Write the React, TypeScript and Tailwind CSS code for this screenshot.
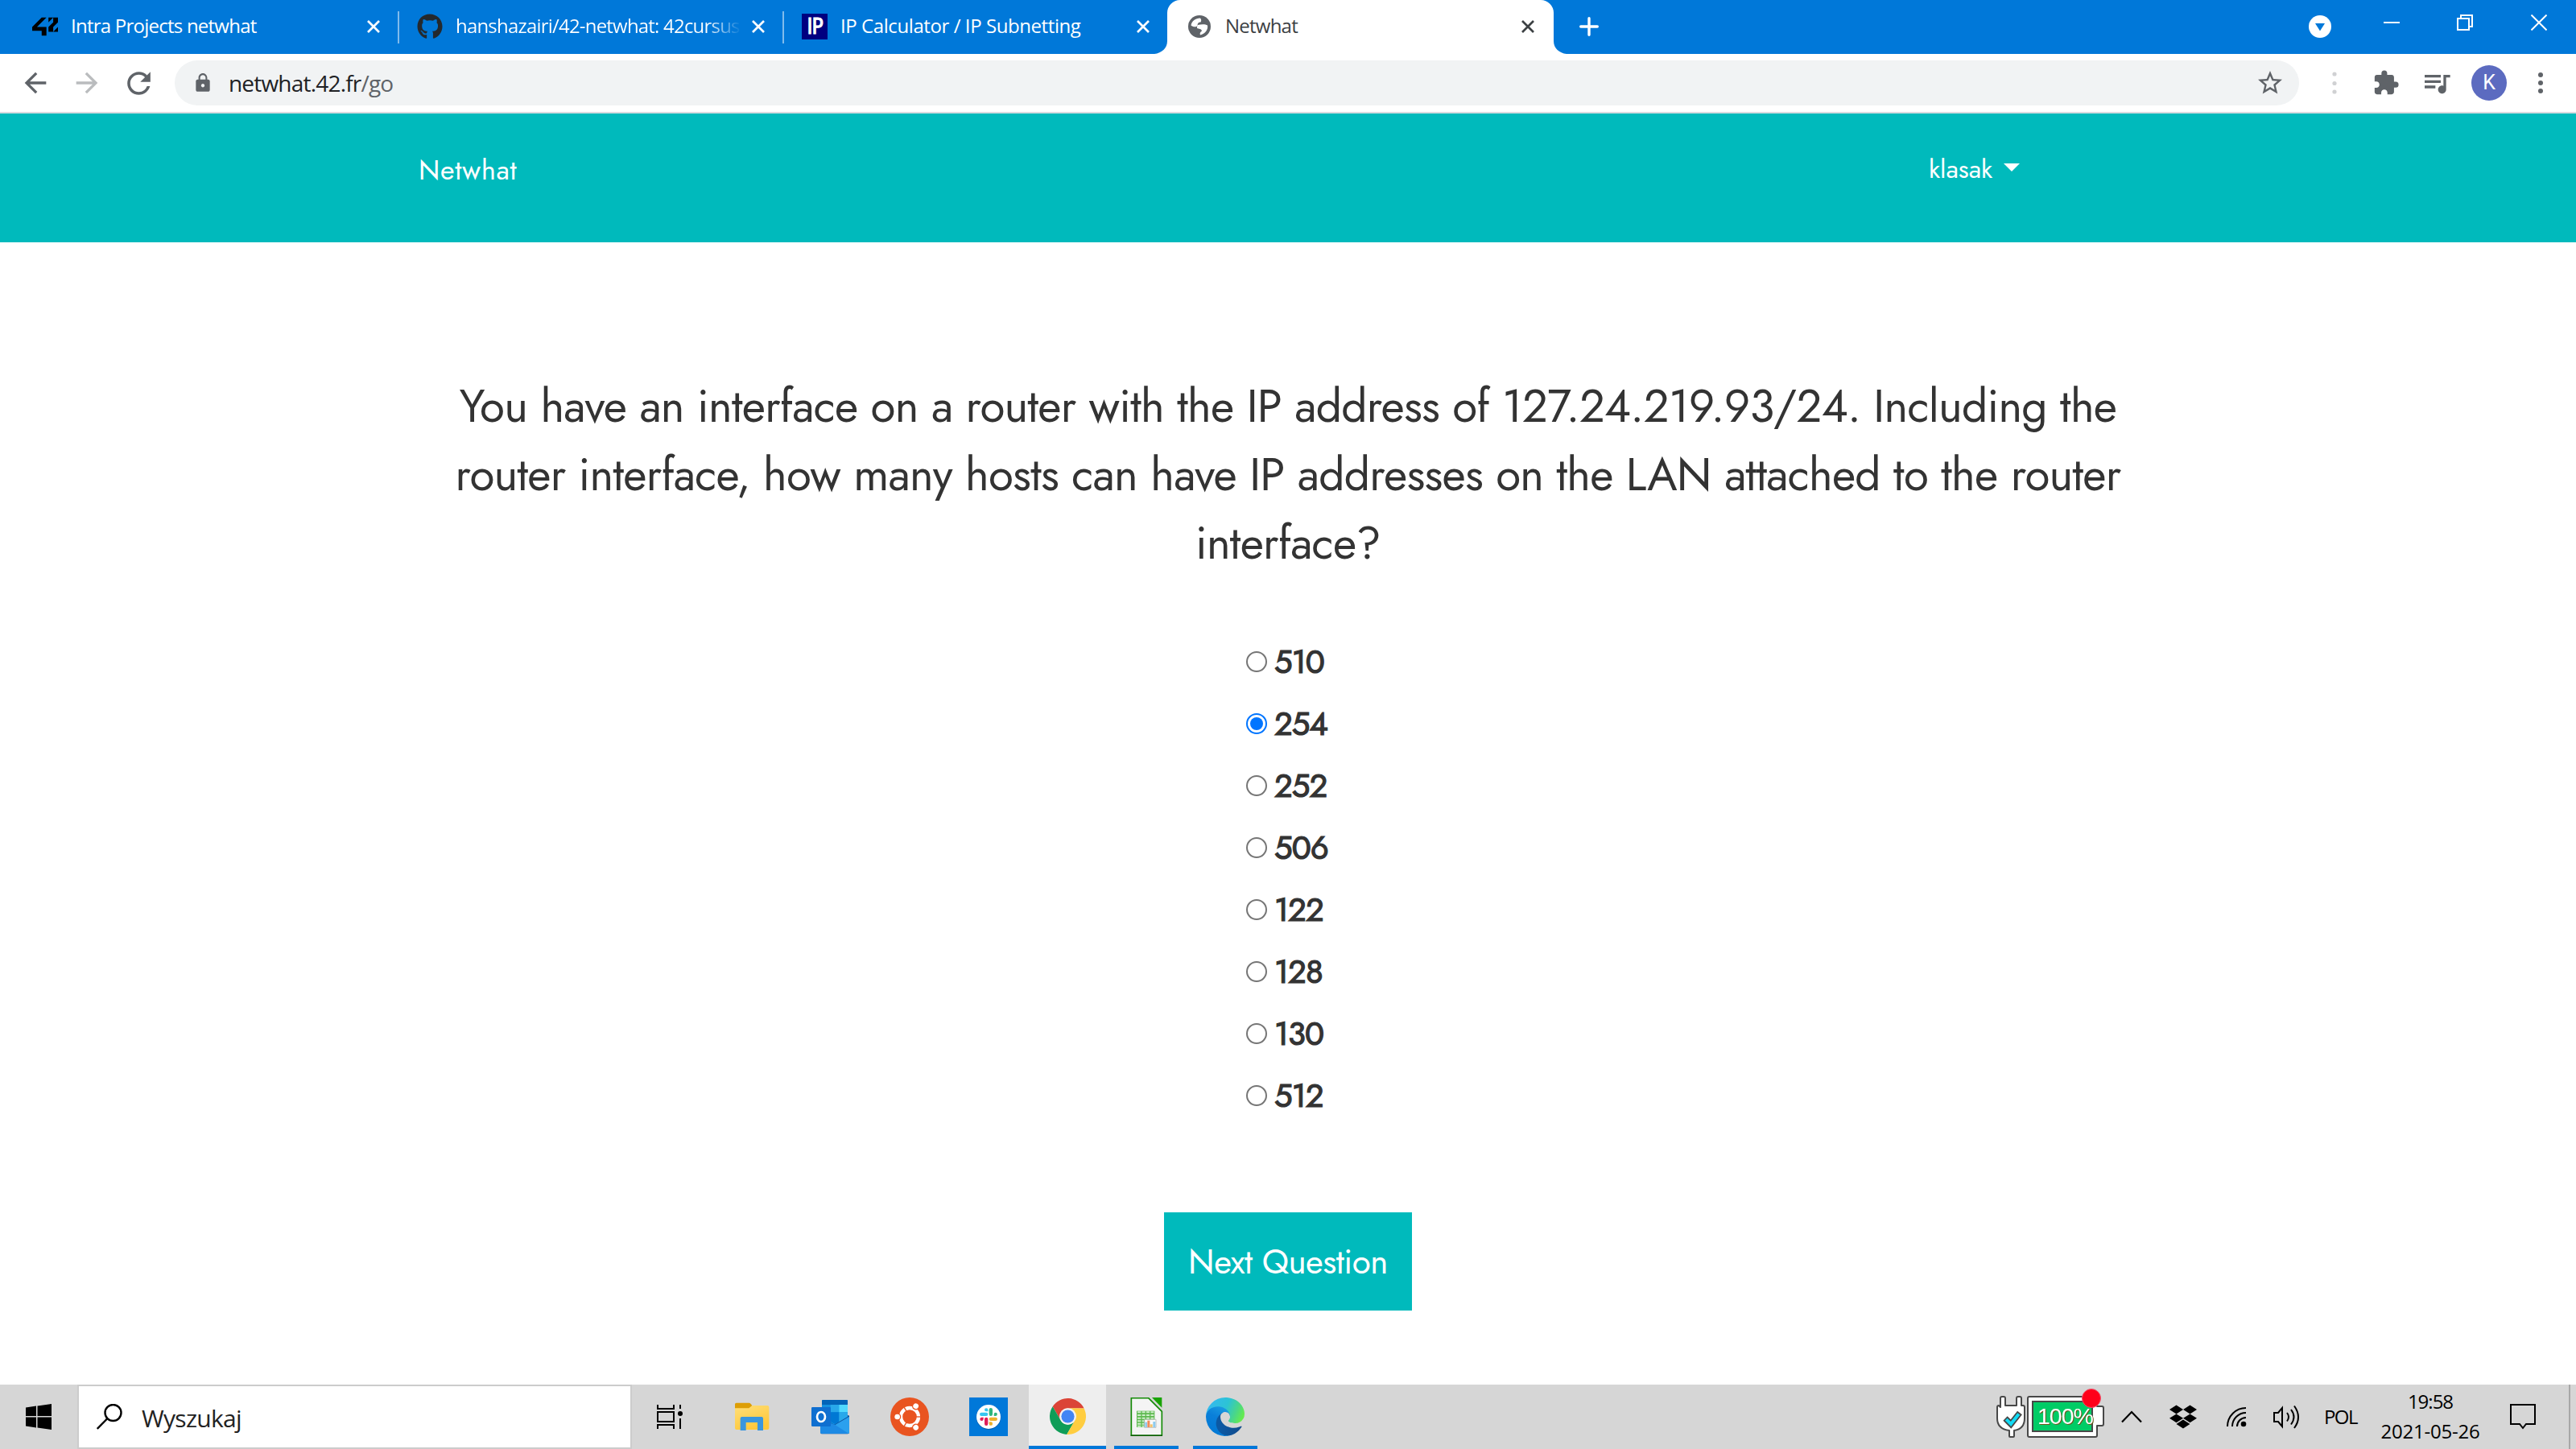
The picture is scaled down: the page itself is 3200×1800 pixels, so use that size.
import type { ReactNode } from "react";
import { FaDropbox, FaGithub } from "react-icons/fa";
import { MdArrowBack, MdArrowForward, MdExtension, MdLock, MdQueueMusic, MdRefresh, MdStarBorder } from "react-icons/md";
import { Si42 } from "react-icons/si";

function CloseIcon({ className }: { className: string }) {
  return (
    <svg viewBox="0 0 16 16" className={`size-4 shrink-0 ${className}`} fill="none" stroke="currentColor" strokeWidth="2.7">
      <path d="M1 1l14 14M15 1L1 15" />
    </svg>
  );
}

function TabStrip() {
  return (
    <div className="flex h-[67px] items-start bg-[#0078d9] font-['Open_Sans',sans-serif] text-[24px] text-white">
      <div className="flex h-[66px] w-[494px] items-center pl-[40px]">
        <Si42 className="size-8 shrink-0 text-black" />
        <span className="ml-4 w-[368px] pb-[2px] tracking-[-0.76px] whitespace-nowrap">Intra Projects netwhat</span>
        <CloseIcon className="text-white" />
      </div>
      <div className="mt-[14px] h-10 w-[2px] bg-[#80bbec]" />
      <div className="flex h-[66px] w-[476px] items-center pl-[22px]">
        <FaGithub className="size-8 shrink-0 text-[#24292e]" />
        <span className="ml-[16px] w-[362px] shrink-0 bg-linear-to-r from-white from-[86%] to-transparent to-[98%] bg-clip-text pb-[2px] tracking-[-0.8px] whitespace-nowrap text-transparent">
          hanshazairi/42-netwhat: 42cursus
        </span>
        <CloseIcon className="ml-[6px] text-white" />
      </div>
      <div className="mt-[14px] h-10 w-[2px] bg-[#80bbec]" />
      <div className="flex h-[66px] w-[460px] items-center pl-[22px]">
        <span className="flex size-8 shrink-0 items-center justify-center bg-[#000080] font-['DejaVu_Sans_Condensed','DejaVu_Sans',sans-serif] text-[26px] leading-none tracking-[-1px]">
          <span className="[-webkit-text-stroke:1px_white]">IP</span>
        </span>
        <span className="ml-[16px] w-[368px] pb-[2px] tracking-[-0.42px] whitespace-nowrap">IP Calculator / IP Subnetting</span>
        <CloseIcon className="text-white" />
      </div>
      <svg viewBox="0 0 16 67" className="h-[67px] w-4 shrink-0" fill="#fff">
        <path d="M0 67C9 66 16 60 16 51V16C16 10 16 5 16 0V67Z" />
      </svg>
      <div className="flex h-[67px] w-[480px] items-start rounded-t-2xl bg-white">
        <div className="flex h-[66px] items-center pl-[26px] text-[#3c4043]">
          <svg viewBox="0 0 28 28" className="size-7 shrink-0">
            <circle cx="14" cy="14" r="14" fill="#5f6368" />
            <path d="M15 3.500C9 3.500 4.500 7 3.500 12.500c2 2 6.500 2.500 8 .5 0-3 1-4.500 4-4.500 1-1.500 1-3.500-.5-5z" fill="#fff" />
            <path d="M12 12c4-1 9-1.500 12 .5 1 5.500-3 10.500-9 12-1-2 0-4 2-5-.5-3-4-2.500-6-3.500 0-2 0-3 1-4z" fill="#fff" />
          </svg>
          <span className="ml-[18px] w-[368px] pb-[2px] tracking-[-0.76px]">Netwhat</span>
          <CloseIcon className="text-[#3c4043]" />
        </div>
      </div>
      <svg viewBox="0 0 16 67" className="h-[67px] w-4 shrink-0" fill="#fff">
        <path d="M16 67C7 66 0 60 0 51V67Z" />
      </svg>
      <svg viewBox="0 0 24 24" className="mt-[21px] ml-4 size-6" fill="none" stroke="#fff" strokeWidth="3.4" strokeLinecap="round">
        <path d="M12 1.7v20.6M1.7 12h20.6" />
      </svg>
      <svg viewBox="0 0 28 28" className="mt-[19px] ml-auto size-7">
        <circle cx="14" cy="14" r="14" fill="#fff" />
        <path d="M8 10h12l-6 9.5z" fill="#0078d9" />
      </svg>
      <svg viewBox="0 0 20 20" className="mt-[18px] ml-[65px] size-5" stroke="#fff" strokeWidth="2">
        <path d="M0 10h20" />
      </svg>
      <svg viewBox="0 0 20 20" className="mt-[18px] ml-[71px] size-5" fill="none" stroke="#fff" strokeWidth="2">
        <path d="M1 5h14v14H1zM5 5V1h14v14h-4" />
      </svg>
      <svg viewBox="0 0 20 20" className="mt-[18px] mr-[36px] ml-[72px] size-5" fill="none" stroke="#fff" strokeWidth="2">
        <path d="M.5 .5l19 19M19.5 .5l-19 19" />
      </svg>
    </div>
  );
}

function Toolbar() {
  return (
    <div className="flex h-[74px] items-center border-b-2 border-[#d8dce0] bg-white pl-[24px] text-[#5f6368]">
      <MdArrowBack className="size-10 shrink-0" />
      <MdArrowForward className="ml-6 size-10 shrink-0 text-[#babcbe]" />
      <MdRefresh className="ml-[23px] size-[43px] shrink-0" />
      <div className="ml-[23px] flex h-14 w-[2639px] shrink-0 items-center rounded-full bg-[#f1f3f4] pl-[22px]">
        <MdLock className="size-[26px] shrink-0 text-[#5f6368]" />
        <span className="ml-[19px] font-['Open_Sans',sans-serif] text-[28px] tracking-[-0.8px] text-[#202124]">
          netwhat.42.fr<span className="text-[#5f6368]">/go</span>
        </span>
        <MdStarBorder className="mr-[18px] ml-auto size-[36px]" />
      </div>
      <svg viewBox="0 0 6 30" className="ml-[41px] h-[30px] w-[6px]" fill="#d0d1d3">
        <circle cx="3" cy="4" r="2.6" /><circle cx="3" cy="15.500" r="2.600" /><circle cx="3" cy="26" r="2.6" />
      </svg>
      <MdExtension className="ml-[44px] size-[34px]" />
      <MdQueueMusic className="ml-[26px] size-10" />
      <div className="ml-[23px] flex size-11 items-center justify-center rounded-full bg-[#5c6bc0] font-['Roboto',sans-serif] text-[25px] text-white">K</div>
      <svg viewBox="0 0 6 26" className="ml-[39px] h-[26px] w-[6px]" fill="#5f6368">
        <circle cx="3" cy="3" r="3" /><circle cx="3" cy="13" r="3" /><circle cx="3" cy="23" r="3" />
      </svg>
    </div>
  );
}

const answers = ["510", "254", "252", "506", "122", "128", "130", "512"];

function Page() {
  return (
    <main className="flex h-[1579px] flex-col bg-white font-['Jost','Lato',sans-serif]">
      <header className="flex h-[160px] items-start bg-[#00babc] text-white">
        <span className="mt-[46px] ml-[520px] w-[1876px] text-[34px] leading-[50px] tracking-[0.7px]">Netwhat</span>
        <span className="mt-[44px] text-[32px] leading-[50px]">klasak</span>
        <svg viewBox="0 0 20 10" className="mt-[62px] ml-[14px] h-[10px] w-5" fill="#fff"><path d="M0 0h20L10 10z" /></svg>
      </header>
      <h1 className="mt-[161px] text-center text-[56.500px] leading-[85px] font-normal tracking-[-0.72px] text-[#333]">
        <span className="block">You have an interface on a router with the IP address of 127.24.219.93/24. Including the</span>
        <span className="block">router interface, how many hosts can have IP addresses on the LAN attached to the router</span>
        <span className="block">interface?</span>
      </h1>
      <ul className="mt-[67px] flex flex-col pl-[1548px]">
        {answers.map((a) => (
          <li key={a} className="flex h-[77px] items-center">
            <span className={a === "254" ? "mb-px flex size-[26px] items-center justify-center rounded-full border-2 border-[#0075ff]" : "mb-px size-[26px] rounded-full border-2 border-[#767676]"}>
              {a === "254" && <span className="size-4 rounded-full bg-[#0075ff]" />}
            </span>
            <span className="ml-[9px] text-[40px] leading-[77px] font-normal tracking-[-0.9px] text-[#333] proportional-nums [-webkit-text-stroke:1.2px_#333]">{a}</span>
          </li>
        ))}
      </ul>
      <button className="mt-[106px] h-[122px] w-[308px] self-center bg-[#00babc] text-[42px] tracking-[-0.45px] text-white">Next Question</button>
    </main>
  );
}

function AppIcon({ box, className, children }: { box: string; className: string; children: ReactNode }) {
  return (
    <svg viewBox={box} className={`size-12 shrink-0 ${className}`}>
      {children}
    </svg>
  );
}

function ChromeIcon() {
  const blade = "M-83.600-54.900A100 100 0 0 1 89.300-45L0-45A45 45 0 0 0-39 22.500Z";
  return (
    <svg viewBox="-100 -100 200 200" className="size-[45px]">
      <path d={blade} fill="#db4437" />
      <path d={blade} fill="#0f9d58" transform="rotate(-120)" />
      <path d={blade} fill="#ffcd40" transform="rotate(120)" />
      <circle r="46" fill="#f1f1f1" />
      <circle r="36" fill="#4285f4" />
    </svg>
  );
}

function PinnedApps() {
  return (
    <>
      <svg viewBox="816 1744 32 32" className="ml-[31px] size-8 shrink-0" fill="none" stroke="#000" strokeWidth="2">
        <path d="M817 1745v5h20v-5M817 1754h20v12h-20zM817 1775v-5h20v5M845 1745v5M845 1762v13" />
        <circle cx="845" cy="1756" r="3" fill="#000" stroke="none" />
      </svg>
      <AppIcon box="390 78 144 144" className="ml-[62px]">
        <defs>
          <linearGradient id="folder" x2="0.5" y2="1"><stop stopColor="#ffdf7a" /><stop offset="1" stopColor="#ffc83a" /></linearGradient>
        </defs>
        <path d="M399 103q0-5 5-5h47q4 0 7 4l5 6-8 12h-56z" fill="#dd9e05" />
        <path d="M399 118h52l12-10h57q6 0 6 6v78q0 6-6 6H405q-6 0-6-6z" fill="url(#folder)" />
        <path d="M419 201v-45q0-6 6-6h73q6 0 6 6v45h-21v-30h-43v30z" fill="#3a96dd" />
      </AppIcon>
      <AppIcon box="684 78 144 144" className="ml-[50px]">
        <path d="M719 150l50-30 56 26v62q0 6-6 6h-96q-5 0-5-5z" fill="#0a4d9b" />
        <path d="M723 91q0-4 4-4h88q4 0 4 4v58l-50 30-46-26z" fill="#1490df" />
        <path d="M723 91q0-4 4-4h88q4 0 4 4v14h-96z" fill="#0364b8" />
        <path d="M755 105h32v28h-32z" fill="#28a8ea" />
        <path d="M787 105h32v28h-32z" fill="#50d9ff" />
        <path d="M755 133h32v35l-15 9-17-9z" fill="#0078d4" />
        <path d="M787 133h32v16l-32 19z" fill="#28a8ea" />
        <path d="M825 149v59q0 5-5 5h-98l50-33z" fill="#2ba0ee" />
        <path d="M717 158l55 22 50 32-4 1h-96q-5 0-5-5z" fill="#1d8ae4" />
        <rect x="684" y="114" width="72" height="72" rx="4" fill="#0f6fd0" />
        <ellipse cx="720" cy="150" rx="15" ry="18" fill="none" stroke="#fff" strokeWidth="8" />
      </AppIcon>
      <AppIcon box="-72 -72 144 144" className="ml-[50px]">
        <circle r="72" fill="#e95420" />
        <circle r="33" fill="none" stroke="#fff" strokeWidth="13" />
        {["rotate(0)", "rotate(120)", "rotate(240)"].map((r) => (
          <g key={r} transform={r}>
            <path d="M22 0h22" stroke="#e95420" strokeWidth="4" />
            <circle cx="-46" r="14" fill="#e95420" />
            <circle cx="-46" r="10" fill="#fff" />
          </g>
        ))}
      </AppIcon>
      <AppIcon box="72 78 144 144" className="ml-[50px]">
        <rect x="72" y="78" width="144" height="144" fill="#0078d9" />
        <circle cx="144" cy="152" r="46" fill="#0062b5" />
        <circle cx="144" cy="150" r="45" fill="#fff" />
        <g fill="#36c5f0"><rect x="111" y="134" width="31" height="13" rx="6.5" /><path d="M142 130V124a6.500 6.500 0 0 0-13 0 6 6 0 0 0 6 6z" /></g>
        <g fill="#2eb67d"><rect x="146" y="117" width="13" height="30" rx="6.5" /><path d="M164 147h6a6.500 6.500 0 0 0 0-13 6 6 0 0 0-6 6z" /></g>
        <g fill="#ecb22e"><rect x="146" y="152" width="31" height="13" rx="6.5" /><path d="M146 169v7a6.500 6.500 0 0 0 13 0 6.500 6.500 0 0 0-7-7z" /></g>
        <g fill="#e01e5a"><rect x="129" y="152" width="13" height="31" rx="6.5" /><path d="M125 152h-7a6.500 6.500 0 1 0 7 7z" /></g>
      </AppIcon>
      <div className="ml-[26px] flex h-20 w-24 shrink-0 items-center justify-center border-b-4 border-[#0078d9] bg-[#eeeeee] pt-[2px]">
        <ChromeIcon />
      </div>
      <div className="ml-[10px] flex h-20 w-20 shrink-0 items-center justify-center border-b-4 border-[#0078d9] pt-1">
        <svg viewBox="659 78 144 144" className="size-12">
          <path d="M675 80h64l50 50v90H675z" fill="#f4f4f4" stroke="#138a06" strokeWidth="5" strokeLinejoin="round" />
          <path d="M673 220h118" stroke="#0b5c03" strokeWidth="5" />
          <path d="M752 78h37v38z" fill="#18a303" />
          <path d="M695 128h67v61h-67z" fill="#5db84f" />
          <path d="M698 133h13M715 133h12M731 133h12M747 133h12M698 144h13M715 144h12M731 144h12M747 144h12M698 155h13M715 155h12M731 155h12M747 155h12M698 166h13M715 166h8M698 176h13M715 176h8M698 185h13M715 185h8" stroke="#cdeec8" strokeWidth="6" />
          <path d="M724 160h43v30h-43z" fill="#fafafa" stroke="#a8a8a8" strokeWidth="2" />
          <path d="M726 170h8v19h-8z" fill="#8ecbef" /><path d="M735 164h9v25h-9z" fill="#f08a5a" /><path d="M745 178h9v11h-9z" fill="#f5c36b" /><path d="M756 168h9v21h-9z" fill="#8ecbef" />
        </svg>
      </div>
      <div className="ml-[18px] flex h-20 w-20 shrink-0 items-center justify-center border-b-4 border-[#0078d9] pt-1">
        <svg viewBox="0 0 256 256" className="size-12">
          <defs>
            <linearGradient id="edgeDark" x1="0.2" x2="1"><stop stopColor="#0c59a4" /><stop offset="1" stopColor="#114a8b" /></linearGradient>
            <linearGradient id="edgeBlue" x1="0.6" y1="0" x2="0.2" y2="1"><stop stopColor="#1b9de2" /><stop offset="0.4" stopColor="#0a7fd9" /><stop offset="1" stopColor="#0078d4" /></linearGradient>
            <linearGradient id="edgeGreen" x1="0" y1="0.3" x2="1" y2="0.6"><stop stopColor="#35b8f1" /><stop offset="0.5" stopColor="#2cc3d5" /><stop offset="0.78" stopColor="#49d68a" /><stop offset="1" stopColor="#66eb4e" /></linearGradient>
          </defs>
          <path d="M231 190.500c-3.400 1.800-6.900 3.400-10.500 4.700a101.500 101.500 0 0 1-35.900 6.500c-47.300 0-88.500-32.500-88.500-74.300a31.500 31.500 0 0 1 16.400-27.300c-42.800 1.800-53.800 46.400-53.800 72.500 0 73.900 68.100 81.400 82.800 81.400 7.900 0 19.800-2.300 27-4.600l1.300-.4a128.300 128.300 0 0 0 66.600-52.800 4 4 0 0 0-5.400-5.700z" fill="url(#edgeDark)" />
          <path d="M105.700 241.400a79.200 79.200 0 0 1-22.700-21.300 80.700 80.700 0 0 1 29.500-120c3.200-1.500 8.500-4.100 15.600-4a32.400 32.400 0 0 1 25.700 13 31.900 31.900 0 0 1 6.300 18.700c0-.2 24.500-79.600-80-79.600-43.900 0-80 41.700-80 78.200a130.200 130.200 0 0 0 12.100 56 128 128 0 0 0 156.400 67 75.500 75.500 0 0 1-62.800-8z" fill="url(#edgeBlue)" />
          <path d="M152.300 148.900c-.9 1-3.400 2.500-3.400 5.600 0 2.600 1.700 5.200 4.800 7.300 14.400 10 41.500 8.700 41.500 8.700a59.600 59.600 0 0 0 30.300-8.300 61.400 61.400 0 0 0 30.400-52.900c.3-22.400-8-37.300-11.300-43.900C223.500 23.900 177.700 0 128 0A128 128 0 0 0 0 126.200c.5-36.500 36.800-66 80-66 3.500 0 23.500.3 42 10 16.300 8.600 24.900 18.900 30.800 29.200 6.200 10.700 7.300 24.100 7.300 29.500s-2.700 13.300-7.800 19.900z" fill="url(#edgeGreen)" />
        </svg>
      </div>
    </>
  );
}

function BatteryIcon() {
  return (
    <svg viewBox="2479 1720 137 80" className="ml-[917px] h-20 w-[137px] shrink-0">
      <g fill="#fff" stroke="#484848" strokeWidth="2" strokeLinejoin="round">
        <path d="M2485 1748v-11q0-2 2-2h2q2 0 2 2v9h14v-9q0-2 2-2h2q2 0 2 2v9h2q2 0 2 2v14q0 13-13 15v7q0 1-1 1h-4q-1 0-1-1v-7q-15-2-15-15v-14q0-2 2-2z" />
        <path d="M2521 1735h81q3 0 3 3v9h6q2 0 2 2v20q0 2-2 2h-6v12q0 2-2 2h-82q-2 0-2-2v-46q0-2 2-2z" />
      </g>
      <path d="M2491 1762l7 7 11-14" fill="none" stroke="#484848" strokeWidth="7.500" />
      <path d="M2492.200 1763.200l5.800 5.800 9.800-12.500" fill="none" stroke="#12dbf5" strokeWidth="4" />
      <path d="M2525 1741h74v37h-74z" fill="#00cc66" stroke="#484848" strokeWidth="2" />
      <text x="2531" y="1769" fontSize="28.500" letterSpacing="-1" fontFamily="Liberation Sans, sans-serif" fill="#fff" className="drop-shadow-[1px_1px_0_#6b5a1c]">100%</text>
      <circle cx="2598" cy="1737" r="11.500" fill="#ff0019" stroke="#f2506a" strokeWidth="1" />
    </svg>
  );
}

function Taskbar() {
  return (
    <footer className="flex h-20 items-center bg-[#d6d6d6] font-['Open_Sans',sans-serif] text-[24px] text-black">
      <svg viewBox="0 0 32 32" className="ml-8 size-8 shrink-0" fill="#000">
        <path d="M0 4.500L13 2.600V15H0zM14.500 2.400L32 0V15H14.500zM0 16.500H13V29.400L0 27.500zM14.500 16.500H32V32L14.500 29.600z" />
      </svg>
      <label className="ml-8 flex h-20 w-[689px] shrink-0 items-center border-2 border-[#cccccc] bg-white pl-[22px]">
        <svg viewBox="0 0 32 32" className="size-8" fill="none" stroke="#000" strokeWidth="2.400">
          <circle cx="20.500" cy="11" r="10" /><path d="M13.500 18L.8 31" />
        </svg>
        <span className="ml-[24px] pt-[2px] text-[30px] tracking-[-0.7px] text-[#222]">Wyszukaj</span>
      </label>
      <PinnedApps />
      <BatteryIcon />
      <svg viewBox="2634 1752 28 16" className="ml-[18px] h-4 w-7 shrink-0" fill="none" stroke="#000" strokeWidth="2.200">
        <path d="M2636 1766.500l12-12.500 12 12.500" />
      </svg>
      <FaDropbox className="ml-[33px] size-[34px] shrink-0" />
      <svg viewBox="2764 1748 28 28" className="ml-[35px] size-7 shrink-0" fill="none" stroke="#000" strokeWidth="2">
        <path d="M2767 1774a23 23 0 0 1 23-23M2773 1774a17 17 0 0 1 17-17M2779 1774a11 11 0 0 1 11-11" />
        <circle cx="2787" cy="1771" r="3.300" fill="#000" stroke="none" />
      </svg>
      <svg viewBox="2822 1744 36 32" className="ml-[30px] h-8 w-9 shrink-0" fill="none" stroke="#000" strokeWidth="2">
        <path d="M2825 1755h5l5-6v23l-5-6h-5zM2841 1755q4 5 0 10.500M2846 1751q7 9 0 18.500M2850 1746.500q10 14 0 27.500" />
      </svg>
      <span className="ml-[29px] w-[62px] tracking-[-1.600px]">POL</span>
      <span className="flex h-[76px] w-[140px] flex-col text-center leading-[37px] tracking-[-0.200px]">
        <span className="tracking-[-1px]">19:58</span>
        <span>2021-05-26</span>
      </span>
      <svg viewBox="3117 1743 34 34" className="ml-[28px] size-[34px] shrink-0" fill="none" stroke="#000" strokeWidth="2">
        <path d="M3119 1745h30v24h-11l-4 5-4-5h-11z" />
      </svg>
      <div className="ml-auto h-20 w-[9px] border-l-2 border-[#a8a8a8]" />
    </footer>
  );
}

export default function App() {
  return (
    <div className="flex h-[1800px] w-[3200px] flex-col overflow-hidden bg-white">
      <TabStrip />
      <Toolbar />
      <Page />
      <Taskbar />
    </div>
  );
}
